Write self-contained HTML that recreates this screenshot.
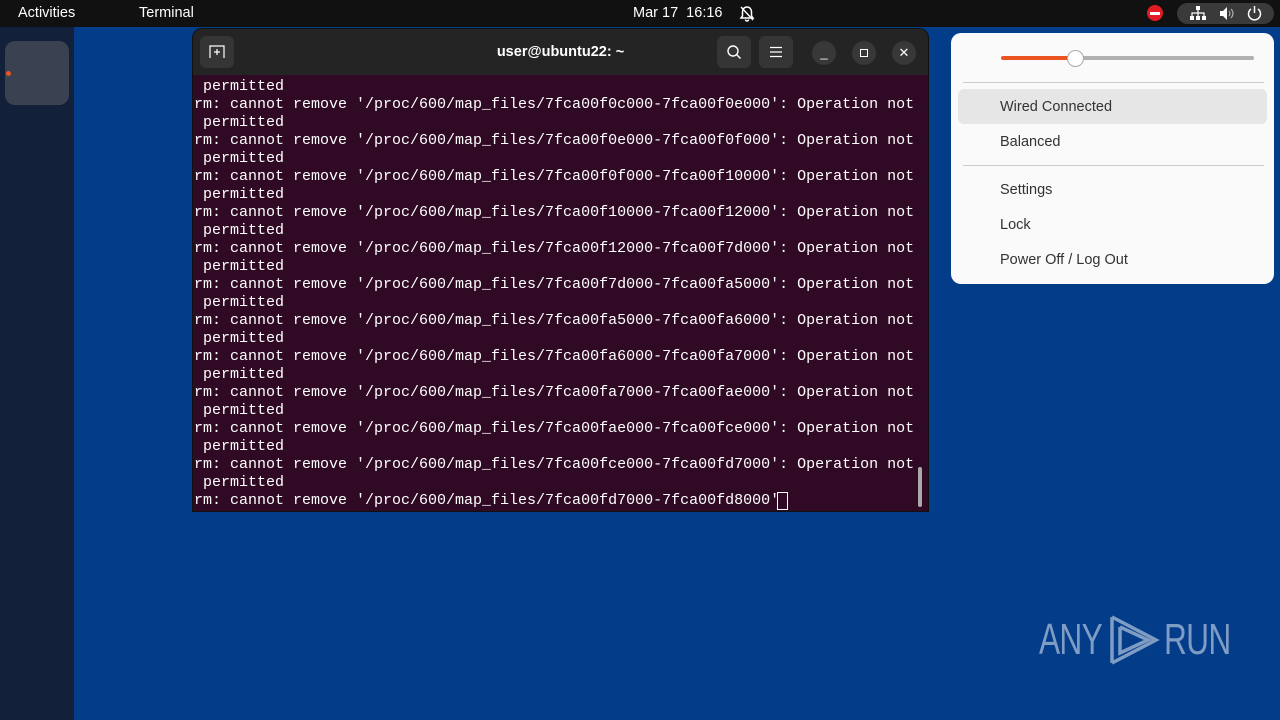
<!DOCTYPE html>
<html><head><meta charset="utf-8"><style>
*{margin:0;padding:0;box-sizing:border-box}
body{width:1280px;height:720px;overflow:hidden;background:#033c89;font-family:"Liberation Sans",sans-serif;position:relative}
.top{position:absolute;left:0;top:0;width:1280px;height:27px;background:#111;color:#fff;font-size:14.5px}
.top span{position:absolute;top:5px}
.dock{position:absolute;left:0;top:27px;width:74px;height:693px;background:#13203a}
.app{position:absolute;left:5px;top:41px;width:64px;height:64px;border-radius:10px;background:#3a4252}
.dot{position:absolute;left:6px;top:71px;width:5px;height:5px;border-radius:50%;background:#e95420}
.win{position:absolute;left:193px;top:29px;width:735px;height:482px;background:#300a24;border-radius:9px 9px 0 0;overflow:hidden;box-shadow:0 0 0 1px #111}
.hdr{height:46px;background:#242424;position:relative;color:#fff}
.btn{position:absolute;top:7px;width:34px;height:32px;border-radius:6px;background:#353535}
.cb{position:absolute;top:12px;width:24px;height:24px;border-radius:50%;background:#383838;color:#fff;font-size:13px;text-align:center;line-height:24px}
.term{position:absolute;left:1px;top:49px;font-family:"Liberation Mono",monospace;font-size:15px;line-height:18px;color:#fff;white-space:pre}
.menu{position:absolute;left:951px;top:33px;width:323px;height:251px;background:#fafafa;border-radius:10px;color:#333;font-size:14.5px}
.menu .it{position:absolute;left:49px}
</style></head><body>
<div class="top">
<span style="left:18px">Activities</span><span style="left:139px">Terminal</span>
<span style="left:633px">Mar 17&nbsp; 16:16</span>
<svg style="position:absolute;left:739px;top:5px" width="16" height="17" viewBox="0 0 16 17"><path d="M8 2c-3 0-4.5 2.5-4.5 5v4L2 13h12l-1.5-2V7C12.5 4.5 11 2 8 2z M6.5 14.5a1.5 1.5 0 0 0 3 0" fill="none" stroke="#fff" stroke-width="1.5"/><path d="M2 2l12 13" stroke="#fff" stroke-width="1.4"/></svg>
<div style="position:absolute;left:1147px;top:5px;width:16px;height:16px;border-radius:50%;background:#e01b24"><div style="position:absolute;left:3px;top:7px;width:10px;height:2.5px;background:#fff"></div></div>
<div style="position:absolute;left:1177px;top:3px;width:97px;height:21px;border-radius:11px;background:#3a3a3a"></div>
<svg style="position:absolute;left:1190px;top:6px" width="16" height="15" viewBox="0 0 16 15"><rect x="6" y="0" width="4" height="4" fill="#fff"/><rect x="0" y="10" width="4" height="4" fill="#fff"/><rect x="12" y="10" width="4" height="4" fill="#fff"/><rect x="6" y="10" width="4" height="4" fill="#fff"/><path d="M8 4v6M2 10V7h12v3" stroke="#fff" fill="none" stroke-width="1.2"/></svg>
<svg style="position:absolute;left:1219px;top:6px" width="16" height="15" viewBox="0 0 16 15"><path d="M1 5h3l4-4v13l-4-4H1z" fill="#fff"/><path d="M10 5q2 2.5 0 5M12 3q4 4.5 0 9" stroke="#aaa" fill="none" stroke-width="1.2"/></svg>
<svg style="position:absolute;left:1247px;top:5px" width="15" height="16" viewBox="0 0 15 16"><path d="M4 4a6 6 0 1 0 7 0" stroke="#fff" fill="none" stroke-width="1.5"/><path d="M7.5 1v7" stroke="#fff" stroke-width="1.5"/></svg>
</div>
<div class="dock"></div><div class="app"></div><div class="dot"></div>
<div class="win">
<div class="hdr">
<div class="btn" style="left:7px"><svg style="position:absolute;left:9px;top:9px" width="16" height="14" viewBox="0 0 16 14"><path d="M1 13V1h14v12M8 4v6M5 7h6" stroke="#fff" fill="none" stroke-width="1.2"/></svg></div>
<div style="position:absolute;left:0;width:735px;top:15px;text-align:center;font-weight:bold;font-size:14.5px">user@ubuntu22: ~</div>
<div class="btn" style="left:524px"><svg style="position:absolute;left:9px;top:8px" width="16" height="16" viewBox="0 0 16 16"><circle cx="7" cy="7" r="5" stroke="#fff" fill="none" stroke-width="1.4"/><path d="M10.5 10.5l4 4" stroke="#fff" stroke-width="1.4"/></svg></div>
<div class="btn" style="left:566px"><svg style="position:absolute;left:11px;top:10px" width="12" height="12" viewBox="0 0 12 12"><path d="M0 1.5h12M0 6h12M0 10.5h12" stroke="#fff" stroke-width="1.3"/></svg></div>
<div class="cb" style="left:619px">_</div>
<div class="cb" style="left:659px"><div style="position:absolute;left:8px;top:8px;width:8px;height:8px;border:1.3px solid #fff"></div></div>
<div class="cb" style="left:699px">✕</div>
</div>
<div class="term"> permitted
rm: cannot remove '/proc/600/map_files/7fca00f0c000-7fca00f0e000': Operation not
 permitted
rm: cannot remove '/proc/600/map_files/7fca00f0e000-7fca00f0f000': Operation not
 permitted
rm: cannot remove '/proc/600/map_files/7fca00f0f000-7fca00f10000': Operation not
 permitted
rm: cannot remove '/proc/600/map_files/7fca00f10000-7fca00f12000': Operation not
 permitted
rm: cannot remove '/proc/600/map_files/7fca00f12000-7fca00f7d000': Operation not
 permitted
rm: cannot remove '/proc/600/map_files/7fca00f7d000-7fca00fa5000': Operation not
 permitted
rm: cannot remove '/proc/600/map_files/7fca00fa5000-7fca00fa6000': Operation not
 permitted
rm: cannot remove '/proc/600/map_files/7fca00fa6000-7fca00fa7000': Operation not
 permitted
rm: cannot remove '/proc/600/map_files/7fca00fa7000-7fca00fae000': Operation not
 permitted
rm: cannot remove '/proc/600/map_files/7fca00fae000-7fca00fce000': Operation not
 permitted
rm: cannot remove '/proc/600/map_files/7fca00fce000-7fca00fd7000': Operation not
 permitted
rm: cannot remove '/proc/600/map_files/7fca00fd7000-7fca00fd8000'</div>
<div style="position:absolute;left:584px;top:463px;width:11px;height:18px;border:1px solid #fff"></div>
<div style="position:absolute;left:725px;top:438px;width:4px;height:40px;border-radius:2px;background:#aaa"></div>
</div>
<div class="menu">
<div style="position:absolute;left:50px;top:23px;width:75px;height:4px;border-radius:2px;background:#e95420"></div>
<div style="position:absolute;left:125px;top:23px;width:178px;height:4px;border-radius:2px;background:#b0b0b0"></div>
<div style="position:absolute;left:116px;top:17px;width:17px;height:17px;border-radius:50%;background:#fff;border:1px solid #aaa"></div>
<div style="position:absolute;left:12px;top:49px;width:301px;height:1px;background:#ccc"></div>
<div style="position:absolute;left:7px;top:56px;width:309px;height:35px;border-radius:6px;background:#e6e6e6"></div>
<div class="it" style="top:66px">Wired Connected</div>
<div class="it" style="top:101px">Balanced</div>
<div style="position:absolute;left:12px;top:132px;width:301px;height:1px;background:#ccc"></div>
<div class="it" style="top:149px">Settings</div>
<div class="it" style="top:184px">Lock</div>
<div class="it" style="top:219px">Power Off / Log Out</div>
</div>
<div style="position:absolute;left:1039px;top:615px;font-family:'Liberation Sans',sans-serif;font-size:44px;color:#7f9cc4;letter-spacing:-1px;transform:scaleX(0.72);transform-origin:left">ANY</div>
<svg style="position:absolute;left:1104px;top:609px" width="60" height="62" viewBox="0 0 60 62"><path d="M8 8v46M8 8l44 23-44 23M16 18l28 13-28 13V18" stroke="#7f9cc4" stroke-width="3.5" fill="none"/></svg>
<div style="position:absolute;left:1164px;top:615px;font-family:'Liberation Sans',sans-serif;font-size:44px;color:#7f9cc4;letter-spacing:-1px;transform:scaleX(0.72);transform-origin:left">RUN</div>
</body></html>
